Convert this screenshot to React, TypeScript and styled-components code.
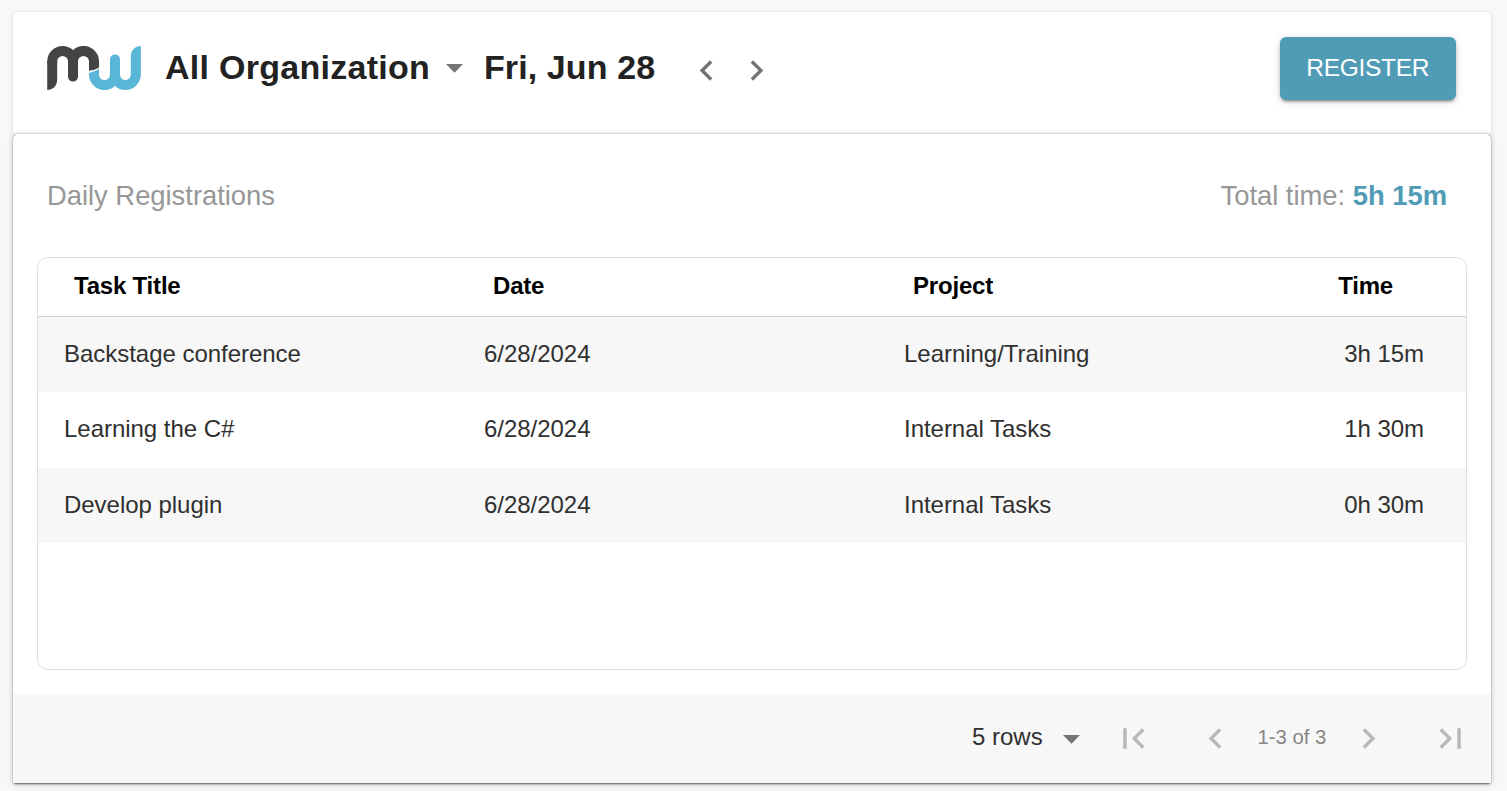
import React from "react";
import styled, { createGlobalStyle } from "styled-components";

const GlobalStyle = createGlobalStyle`
  *, *::before, *::after { box-sizing: border-box; }
  html, body { margin: 0; padding: 0; background: #f8f8f8; overflow: hidden; }
  body { font-family: "Liberation Sans", Arial, Helvetica, sans-serif; color: #222; }
`;

const Page = styled.main`
  display: flex;
  flex-direction: column;
  height: 791px;
  padding: 12px 16.5px 8px 13px;
`;

const TopBar = styled.header`
  display: flex;
  align-items: flex-start;
  height: 122px;
  flex: none;
  padding: 25px 34.5px 0 34px;
  background: #fff;
  border-radius: 5px 5px 0 0;
  box-shadow: 0 1px 4px rgba(0, 0, 0, 0.14);
`;

const Logo = styled.svg`
  width: 94px;
  height: 44px;
  margin-top: 9px;
  flex: none;
`;

const Heading = styled.h1<{ $width: number; $left: number; $spacing: number }>`
  margin: 8px 0 0 ${(p) => p.$left}px;
  width: ${(p) => p.$width}px;
  font-size: 34px;
  line-height: 44px;
  font-weight: 700;
  letter-spacing: ${(p) => p.$spacing}px;
  white-space: nowrap;
`;

const Icon = styled.svg<{ $left?: number; $top?: number; $color?: string }>`
  display: block;
  flex: none;
  width: 41px;
  height: 41px;
  margin-left: ${(p) => p.$left ?? 0}px;
  margin-top: ${(p) => p.$top ?? 0}px;
  fill: ${(p) => p.$color ?? "#757575"};
`;

const RegisterButton = styled.button`
  margin-left: auto;
  width: 176.5px;
  height: 63px;
  padding: 0 0 1px;
  border: 0;
  border-radius: 6px;
  background: #509bb5;
  color: #fff;
  font: 400 24.5px/60px "Liberation Sans", Arial, sans-serif;
  letter-spacing: -0.3px;
  box-shadow: 0 4px 2px -3px rgba(0, 0, 0, 0.24), 0 2px 3px rgba(0, 0, 0, 0.2),
    0 2px 8px rgba(0, 0, 0, 0.14);
`;

const Card = styled.section`
  position: relative;
  display: flex;
  flex-direction: column;
  flex: none;
  height: 649px;
  background: #fff;
  border-radius: 5px 5px 0 0;
  box-shadow: 0 2px 2px -1px rgba(0, 0, 0, 0.5), 0 0 2px rgba(0, 0, 0, 0.3),
    0 1px 7px rgba(0, 0, 0, 0.2);
`;

const CardHeader = styled.div`
  display: flex;
  justify-content: space-between;
  height: 123px;
  padding: 44px 43.5px 0 34px;
  font-size: 27.4px;
  line-height: 35px;
  letter-spacing: -0.02px;
  color: #979797;
`;

const Total = styled.strong`
  color: #509bb5;
`;

const Table = styled.div`
  height: 413px;
  margin: 0 23.5px 24px 24px;
  border: 1px solid #dedede;
  border-radius: 11px;
  overflow: hidden;
`;

const Row = styled.div<{ $shaded?: boolean }>`
  display: grid;
  grid-template-columns: 420px 420px 1fr auto;
  align-items: center;
  height: 75.4px;
  padding: 0 42px 1.6px 26px;
  font-size: 24px;
  letter-spacing: -0.03px;
  color: #303030;
  background: ${(p) => (p.$shaded ? "#f7f7f7" : "#fff")};
`;

const HeadRow = styled(Row)`
  height: 59px;
  padding: 0 73px 3px 36px;
  grid-template-columns: 419px 420px 1fr auto;
  font-weight: 700;
  letter-spacing: -0.2px;
  color: #000;
  border-bottom: 1px solid #d2d2d2;
`;

const Footer = styled.footer`
  display: flex;
  align-items: center;
  flex: 1;
  padding-left: 959px;
  background: #f7f7f7;
`;

const RowCount = styled.span`
  width: 78px;
  font-size: 24px;
  line-height: 30px;
  color: #303030;
  margin-top: -3px;
`;

const Range = styled.span`
  width: 90px;
  margin: -3px 0 0 21.5px;
  font-size: 20.3px;
  color: #858585;
  white-space: nowrap;
`;

const paths = {
  down: "M7 10l5 5 5-5z",
  left: "M15.41 7.41L14 6l-6 6 6 6 1.41-1.41L10.83 12z",
  right: "M10 6L8.59 7.41 13.17 12l-4.58 4.59L10 18l6-6z",
  first: "M18.41 16.59L13.82 12l4.59-4.59L17 6l-6 6 6 6zM6 6h2v12H6z",
  last: "M5.59 7.41L10.18 12l-4.59 4.59L7 18l6-6-6-6zM16 6h2v12h-2z",
};

interface GlyphProps {
  name: keyof typeof paths;
  left?: number;
  top?: number;
  color?: string;
}

const Glyph = ({ name, left, top, color }: GlyphProps) => (
  <Icon viewBox="0 0 24 24" $left={left} $top={top} $color={color}>
    <path d={paths[name]} />
  </Icon>
);

const MwLogo = () => (
  <Logo viewBox="0 0 94 44" fill="none" strokeWidth="10">
    <path d="M5.2 15.4A10.4 10.4 0 0 1 26 15.4V30.6" stroke="#444" strokeLinecap="round" />
    <path d="M26 15.4A10.4 10.4 0 0 1 47 15.4" stroke="#444" />
    <path d="M.2 15V44C6 44 10.2 40 10.2 33V15zM42 15V24.7C46 24.4 49 23.3 52 21.5V15z" fill="#444" />
    <path d="M88.8 28.6A10.4 10.4 0 0 1 68 28.6V13.4M68 28.6A10.4 10.4 0 0 1 47 28.6" stroke="#59b6d6" />
    <circle cx="68" cy="13.4" r="5" fill="#59b6d6" />
    <path d="M93.8 29V0C88 0 83.8 4 83.8 11V29zM52 29V22.8C49 24.8 45.5 26.3 41.8 26.8L42 29z" fill="#59b6d6" />
  </Logo>
);

const entries = [
  { title: "Backstage conference", date: "6/28/2024", project: "Learning/Training", time: "3h 15m" },
  { title: "Learning the C#", date: "6/28/2024", project: "Internal Tasks", time: "1h 30m" },
  { title: "Develop plugin", date: "6/28/2024", project: "Internal Tasks", time: "0h 30m" },
];

const muted = "#b8b8b8";

export default function App() {
  return (
    <>
      <GlobalStyle />
      <Page>
        <TopBar>
          <MwLogo />
          <Heading $left={24} $width={269} $spacing={0.28}>All Organization</Heading>
          <Glyph name="down" top={10} />
          <Heading $left={9} $width={170} $spacing={0.1}>Fri, Jun 28</Heading>
          <Glyph name="left" left={31.5} top={13} />
          <Glyph name="right" left={9.5} top={13} />
          <RegisterButton>REGISTER</RegisterButton>
        </TopBar>
        <Card>
          <CardHeader>
            <span>Daily Registrations</span>
            <span>Total time: <Total>5h 15m</Total></span>
          </CardHeader>
          <Table>
            <HeadRow>
              <span>Task Title</span>
              <span>Date</span>
              <span>Project</span>
              <span>Time</span>
            </HeadRow>
            {entries.map((e, i) => (
              <Row key={e.title} $shaded={i % 2 === 0}>
                <span>{e.title}</span>
                <span>{e.date}</span>
                <span>{e.project}</span>
                <span>{e.time}</span>
              </Row>
            ))}
          </Table>
          <Footer>
            <RowCount>5 rows</RowCount>
            <Glyph name="down" left={1} />
            <Glyph name="first" left={20.5} color={muted} />
            <Glyph name="left" left={41.5} color={muted} />
            <Range>1-3 of 3</Range>
            <Glyph name="right" color={muted} />
            <Glyph name="last" left={41} color={muted} />
          </Footer>
        </Card>
      </Page>
    </>
  );
}
